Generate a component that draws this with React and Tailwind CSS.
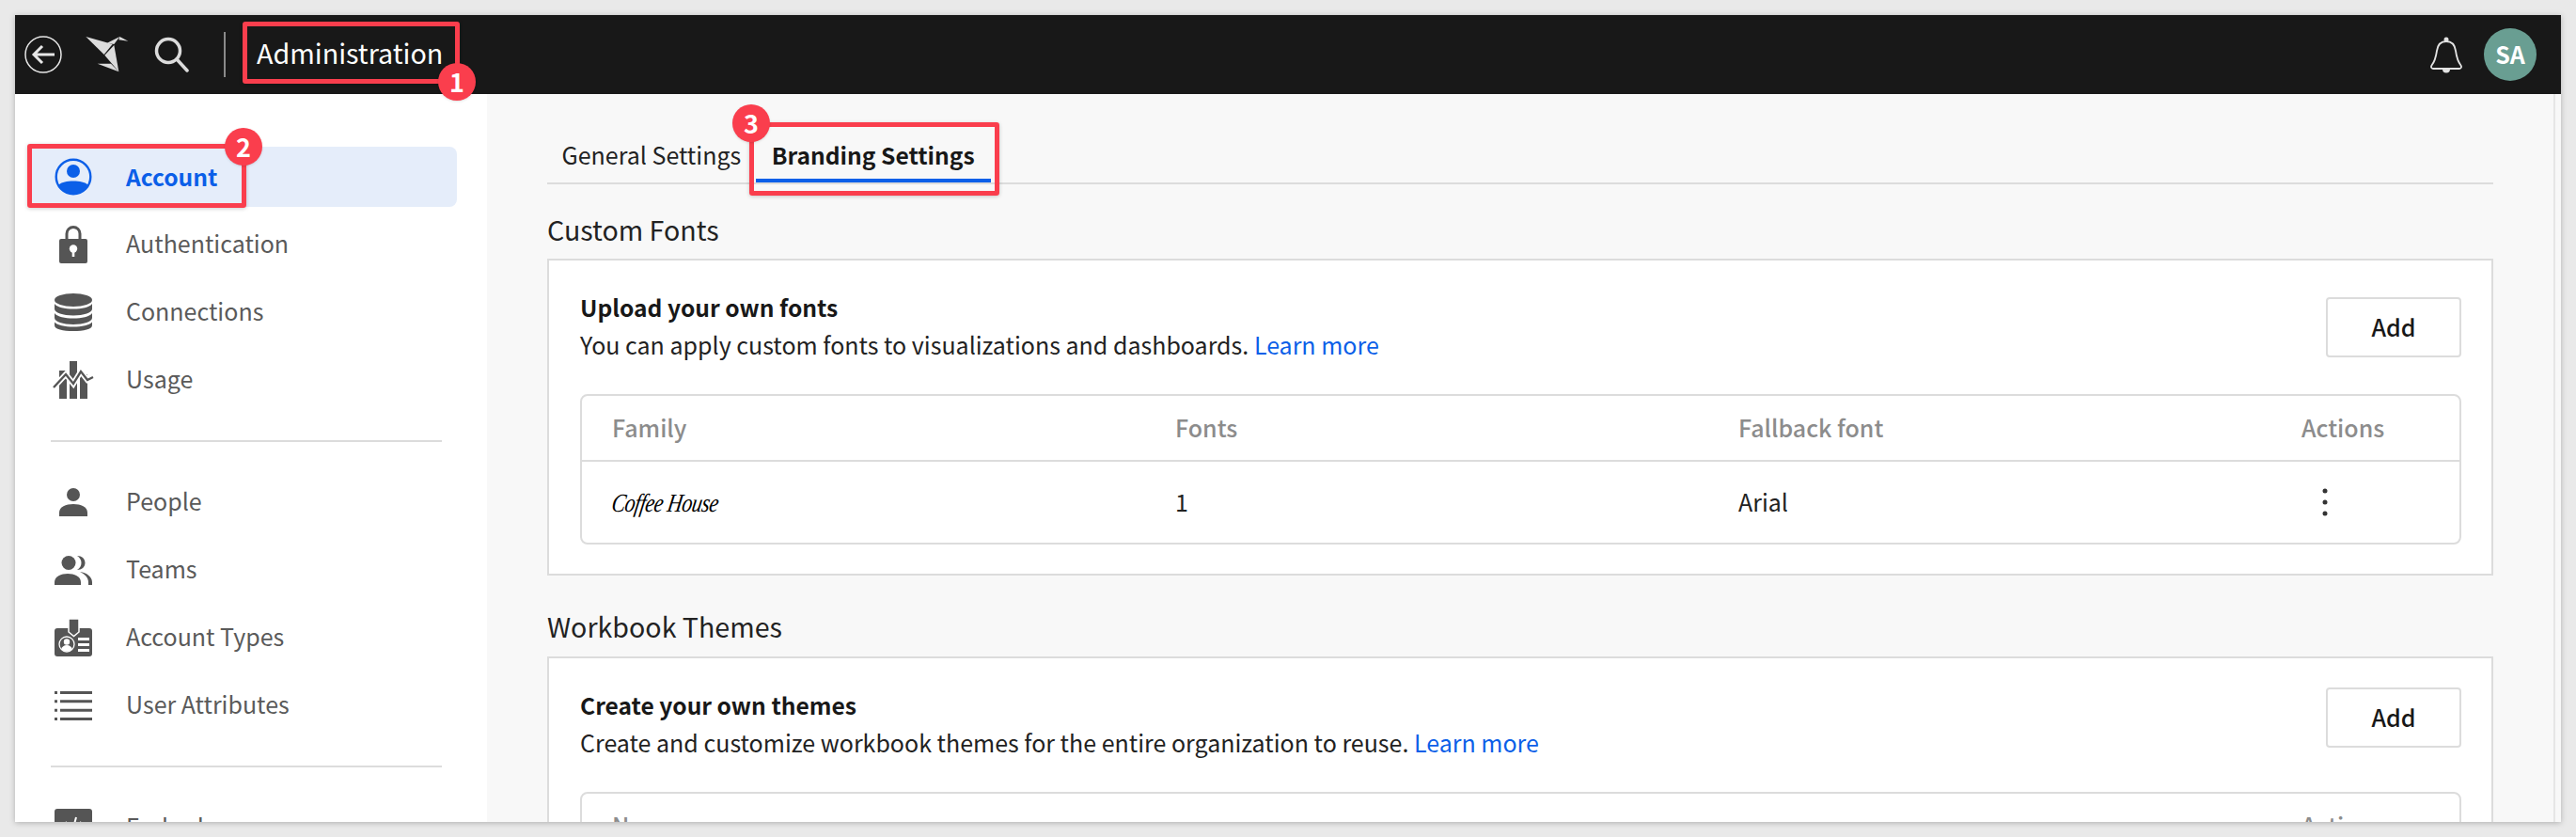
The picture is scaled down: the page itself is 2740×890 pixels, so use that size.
import React from 'react';

const AccountIcon = () => (
  <svg width="40" height="40" viewBox="0 0 40 40" fill="none">
    <circle cx="20" cy="20" r="18.300" stroke="#0b5fe8" strokeWidth="2.400" />
    <circle cx="20" cy="14" r="7" fill="#0b5fe8" />
    <path d="M4.500 28.500C8 25.500 13 24.500 20 24.500s12 1 15.500 4C32 34.500 27 38 20 38S8 34.500 4.500 28.500Z" fill="#0b5fe8" />
  </svg>
);

const LockIcon = () => (
  <svg width="30" height="40" viewBox="0 0 30 40">
    <path d="M8 15V8.500a7 7 0 0 1 14 0V15" fill="none" stroke="#555" strokeWidth="3" />
    <path d="M2 14h26a2 2 0 0 1 2 2v22a2 2 0 0 1-2 2H2a2 2 0 0 1-2-2V16a2 2 0 0 1 2-2Z" fill="#555" />
    <circle cx="15" cy="24.500" r="4.200" fill="#fff" />
    <rect x="13.700" y="25" width="2.600" height="8" fill="#fff" />
  </svg>
);

const DatabaseIcon = () => (
  <svg width="40" height="40" viewBox="0 0 40 40" fill="#555">
    <ellipse cx="20" cy="7" rx="20" ry="7" />
    <path d="M0 11c3 4 11 5.500 20 5.500S37 15 40 11v5.500c0 4-9 7-20 7S0 20.500 0 16.500Z" />
    <path d="M0 21c3 4 11 5.500 20 5.500S37 25 40 21v5c0 4-9 7-20 7S0 30 0 26Z" />
    <path d="M0 30.500c3 3.500 11 5 20 5s17-1.500 20-5V34c0 4-9 6-20 6S0 38 0 34Z" />
  </svg>
);

const UsageIcon = () => (
  <svg width="44" height="40" viewBox="0 0 44 40">
    <path d="M7 10h8v30H7ZM18 0h8v40h-8ZM29 14h8v26h-8Z" fill="#555" />
    <path d="M1 28 14 14l8 10 8-13 7 9 6-3" fill="none" stroke="#fff" strokeWidth="6" />
    <path d="M1 28 14 14l8 10 8-13 7 9 6-3" fill="none" stroke="#555" strokeWidth="2.400" />
  </svg>
);

const PersonIcon = () => (
  <svg width="30" height="30" viewBox="0 0 30 30" fill="#555">
    <circle cx="15" cy="7" r="7" />
    <path d="M0 30v-4c0-6 7-9 15-9s15 3 15 9v4Z" />
  </svg>
);

const TeamsIcon = () => (
  <svg width="40" height="31" viewBox="0 0 40 31" fill="#555">
    <circle cx="15" cy="7.500" r="7.500" />
    <path d="M0 31v-3c0-6 7-9 14-9s14 3 14 9v3Z" />
    <path d="M24 0c5 0 8.500 3 8.500 7.500S29 15 24 15c3-2 4.500-4.500 4.500-7.500S27 2 24 0Z" />
    <path d="M27 17c7 1 13 5 13 11v3h-4v-3c0-5-4-8.500-9-11Z" />
  </svg>
);

const BadgeIcon = () => (
  <svg width="40" height="40" viewBox="0 0 40 40">
    <path d="M3 10h34a3 3 0 0 1 3 3v24a3 3 0 0 1-3 3H3a3 3 0 0 1-3-3V13a3 3 0 0 1 3-3Z" fill="#555" />
    <path d="M15 0h11v14l-5.500 4.500L15 14Z" fill="#555" stroke="#fff" strokeWidth="1.500" />
    <circle cx="13" cy="27" r="8" fill="none" stroke="#fff" strokeWidth="1.300" />
    <circle cx="13" cy="24.500" r="3.200" fill="#fff" />
    <path d="M7 32.500c1-3 3-4.500 6-4.500s5 1.500 6 4.500c-3 2.500-9 2.500-12 0Z" fill="#fff" />
    <path d="M25 20h12v3H25ZM25 26h12v3H25ZM25 32h12v3H25Z" fill="#fff" />
  </svg>
);

const ListIcon = () => (
  <svg width="40" height="31" viewBox="0 0 40 31" fill="#555">
    <path d="M0 0h3v3H0ZM6 0h34v3H6ZM0 9.300h3v3H0ZM6 9.300h34v3H6ZM0 18.700h3v3H0ZM6 18.700h34v3H6ZM0 28h3v3H0ZM6 28h34v3H6Z" />
  </svg>
);

const EmbedIcon = () => (
  <svg width="40" height="40" viewBox="0 0 40 40">
    <rect width="40" height="40" rx="3" fill="#555" />
    <path d="M13 14l-6 6 6 6M27 14l6 6-6 6M23 9l-6 22" fill="none" stroke="#fff" strokeWidth="2" />
  </svg>
);

const navTop = [
  { label: 'Authentication', icon: <LockIcon /> },
  { label: 'Connections', icon: <DatabaseIcon /> },
  { label: 'Usage', icon: <UsageIcon /> },
];

const navUsers = [
  { label: 'People', icon: <PersonIcon /> },
  { label: 'Teams', icon: <TeamsIcon /> },
  { label: 'Account Types', icon: <BadgeIcon /> },
  { label: 'User Attributes', icon: <ListIcon /> },
];

const NavItem = ({ label, icon }) => (
  <div className="flex h-[72px] items-center text-[25px] text-[#5a5a5a]">
    <div className="ml-[40px] flex w-[44px] shrink-0 justify-center">{icon}</div>
    <span className="ml-[34px] -translate-y-[1px]">{label}</span>
  </div>
);

const Divider = () => <div className="mr-[48px] ml-[38px] my-[28px] h-[2px] bg-[#dcdcdc]" />;

const Sidebar = () => (
  <aside className="w-[502px] shrink-0 overflow-hidden bg-white pt-[56px]">
    <div className="ml-[16px] flex h-[64px] w-[454px] items-center rounded-r-lg bg-[#e5edfa] text-[24.6px] font-semibold text-[#0b5fe8]">
      <div className="ml-[26px] shrink-0">
        <AccountIcon />
      </div>
      <span className="ml-[36px] -translate-y-[1px]">Account</span>
    </div>
    <div className="mt-[4px]">
      {navTop.map((item) => (
        <NavItem key={item.label} {...item} />
      ))}
    </div>
    <Divider />
    {navUsers.map((item) => (
      <NavItem key={item.label} {...item} />
    ))}
    <Divider />
    <NavItem label="Embed" icon={<EmbedIcon />} />
  </aside>
);

const Header = () => (
  <header className="flex h-[84px] shrink-0 items-center bg-[#181818] pr-[26px] pl-[10px]">
    <svg width="40" height="40" viewBox="0 0 40 40" fill="none" stroke="#e6e6e6">
      <circle cx="20" cy="20" r="19" strokeWidth="1.500" />
      <path d="M32 20H10M19 11l-9 9 9 9" strokeWidth="3" />
    </svg>
    <svg className="ml-[24px]" width="48" height="40" viewBox="56 35 144 120" fill="#dcdcdc">
      <path d="M60 38 145 62 118 95Z" />
      <path d="M128 58 168 38 150 62Z" />
      <path d="M168 38 195 52 165 48Z" />
      <path d="M120 97 150 65 165 150Z" />
      <path d="M97 124 140 124 165 150Z" />
    </svg>
    <svg className="ml-[26px]" width="37" height="38" viewBox="0 0 37 38" fill="none" stroke="#dcdcdc" strokeWidth="3.500">
      <circle cx="15" cy="15" r="12.500" />
      <path d="M24 24 35 36" strokeLinecap="round" />
    </svg>
    <div className="ml-[37px] h-[48px] w-[2px] bg-[#8a8a8a]" />
    <span className="ml-[33px] -translate-y-[2px] text-[28.7px] text-white">Administration</span>
    <div className="ml-auto flex items-center gap-[23px]">
      <svg width="34" height="40" viewBox="0 0 34 40" fill="none">
        <path d="M3 35c-2 0-2.500-2-1.500-3.500C5 27 6 23 7 16 8 9 12 6 17 6s9 3 10 10c1 7 2 11 5.500 15.500 1 1.500.5 3.500-1.500 3.500Z" stroke="#e2e2e2" strokeWidth="1.800" />
        <circle cx="17" cy="4" r="2.500" fill="#e2e2e2" />
        <path d="M13 35.500h8a4 4 0 0 1-8 0Z" fill="#e2e2e2" />
      </svg>
      <div className="flex h-[56px] w-[56px] items-center justify-center rounded-full bg-[#699e92] text-[25px] font-semibold text-white">
        SA
      </div>
    </div>
  </header>
);

const SectionCard = ({ title, text, cols, row, buttonClass }) => (
  <div className="border-2 border-[#dcdcdc] bg-white pt-[30px] pr-[32px] pb-[31px] pl-[33px]">
    <div className="flex items-start justify-between">
      <div>
        <div className="text-[24.6px] leading-[39px] font-semibold text-[#181818]">{title}</div>
        <div className="mt-[1px] text-[25px] leading-[39px] text-[#222]">
          {text} <span className="text-[#0b5fe8]">Learn more</span>
        </div>
      </div>
      <button className={`h-[64px] w-[144px] rounded border-2 border-[#dcdcdc] bg-white text-[25px] font-medium text-[#181818] ${buttonClass}`}>
        Add
      </button>
    </div>
    <div className="mt-[33px] rounded-lg border-2 border-[#dcdcdc]">
      <div className="grid h-[70px] grid-cols-[599px_599px_599px_1fr] items-center border-b-2 border-[#dcdcdc] pl-[32px] text-[25px] font-medium text-[#8c8c8c]">
        {cols.map((c, i) => (
          <div key={i}>{c}</div>
        ))}
      </div>
      {row}
    </div>
  </div>
);

const fontRow = (
  <div className="grid h-[86px] grid-cols-[599px_599px_599px_1fr] items-center pl-[32px] text-[25px] text-[#222]">
    <span className="inline-block origin-left -skew-x-12 scale-y-125 text-[22px] tracking-[-0.5px] text-black italic [font-family:'Liberation_Serif',serif]">
      Coffee House
    </span>
    <span>1</span>
    <span>Arial</span>
    <svg className="ml-[22px]" width="6" height="30" viewBox="0 0 6 30" fill="#333">
      <circle cx="3" cy="3" r="2.500" />
      <circle cx="3" cy="15" r="2.500" />
      <circle cx="3" cy="27" r="2.500" />
    </svg>
  </div>
);

const Main = () => (
  <main className="min-w-0 flex-1 overflow-hidden bg-[#f8f8f8] pr-[64px] pl-[64px]">
    <div className="flex h-[96px] items-end border-b-2 border-[#dcdcdc]">
      <div className="h-[62px] px-[15.5px] pt-[10px] text-[25px] leading-[44px] text-[#222]">General Settings</div>
      <div className="h-[62px] border-b-4 border-[#0b5fe8] px-[17px] pt-[10px] text-[24.6px] leading-[44px] font-semibold text-[#181818]">
        Branding Settings
      </div>
    </div>
    <h2 className="mt-[25px] mb-[9px] text-[28.6px] leading-[45px] font-normal text-[#222]">Custom Fonts</h2>
    <SectionCard
      title="Upload your own fonts"
      text="You can apply custom fonts to visualizations and dashboards."
      cols={['Family', 'Fonts', 'Fallback font', 'Actions']}
      row={fontRow}
      buttonClass="mt-[9px]"
    />
    <h2 className="mt-[31px] mb-[10px] text-[28.6px] leading-[45px] font-normal text-[#222]">Workbook Themes</h2>
    <SectionCard
      title="Create your own themes"
      text="Create and customize workbook themes for the entire organization to reuse."
      cols={['Name', '', '', 'Actions']}
      row={null}
      buttonClass="mt-[1px]"
    />
  </main>
);

// red annotation marks sit on top of the screenshot
const Mark = ({ boxClass, badgeClass, n }) => (
  <>
    <div className={`absolute rounded-[3px] border-[5px] border-[#fa3e4d] shadow-[0_1px_4px_rgba(0,0,0,0.2)] ${boxClass}`} />
    <div className={`absolute flex h-[40px] w-[40px] items-center justify-center rounded-full bg-[#fa3e4d] text-[27px] font-bold text-white shadow ${badgeClass}`}>
      {n}
    </div>
  </>
);

export default function App() {
  return (
    <div className="relative h-[890px] w-[2740px] overflow-hidden bg-[#e9e9e9] pt-[16px] pl-[16px] [font-family:'Noto_Sans_CJK_SC','Noto_Sans',sans-serif]">
      <div className="flex h-[858px] w-[2708px] flex-col overflow-hidden shadow-[0_1px_6px_rgba(0,0,0,0.25)]">
        <Header />
        <div className="flex min-h-0 flex-1">
          <Sidebar />
          <Main />
          <div className="w-[8px] shrink-0 border-l-2 border-[#e6e6e6] bg-[#f8f8f8]" />
        </div>
      </div>
      <Mark n="1" boxClass="left-[258px] top-[23px] h-[66px] w-[231px]" badgeClass="left-[466px] top-[67px]" />
      <Mark n="2" boxClass="left-[29px] top-[153px] h-[68px] w-[233px]" badgeClass="left-[239px] top-[136px]" />
      <Mark n="3" boxClass="left-[797px] top-[130px] h-[78px] w-[266px]" badgeClass="left-[779px] top-[111px]" />
    </div>
  );
}
